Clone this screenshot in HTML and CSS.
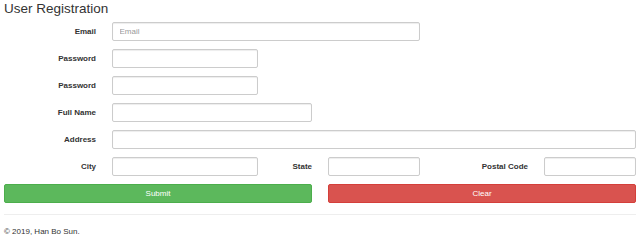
FILE: index.html
```html
<!DOCTYPE html>
<html lang="en">
<head>
<meta charset="utf-8">
<title>User Registration</title>
<link rel="stylesheet" href="styles.css">
</head>
<body>
<div class="container">
  <h3 class="title">User Registration</h3>
  <form class="form">
    <div class="row">
      <label class="label span2">Email</label>
      <input class="input span6" type="email" placeholder="Email">
    </div>
    <div class="row">
      <label class="label span2">Password</label>
      <input class="input span3" type="password">
    </div>
    <div class="row">
      <label class="label span2">Password</label>
      <input class="input span3" type="password">
    </div>
    <div class="row">
      <label class="label span2">Full Name</label>
      <input class="input span4" type="text">
    </div>
    <div class="row">
      <label class="label span2">Address</label>
      <input class="input span10" type="text">
    </div>
    <div class="row">
      <label class="label span2">City</label>
      <input class="input span3" type="text">
      <label class="label span1">State</label>
      <input class="input span2" type="text">
      <label class="label span2">Postal Code</label>
      <input class="input span2" type="text">
    </div>
    <div class="row">
      <button type="button" class="btn btn-success span6">Submit</button>
      <button type="button" class="btn btn-danger span6">Clear</button>
    </div>
  </form>
  <hr class="rule">
  <p class="footer">© 2019, Han Bo Sun.</p>
</div>
</body>
</html>
```

FILE: styles.css
```css
* { box-sizing: border-box; }
html, body { margin: 0; padding: 0; background: #fff; }
body {
  font-family: "Liberation Sans", Arial, Helvetica, sans-serif;
  font-size: 8px;
  color: #333;
}
.container {
  width: 640px;
  padding: 0 4px;
}
.title {
  margin: 1px 0 0 0;
  font-size: 13.5px;
  font-weight: 400;
  line-height: 16px;
  color: #333;
}
.form {
  margin-top: 5px;
  display: flex;
  flex-direction: column;
  gap: 8px;
}
.row {
  display: grid;
  grid-template-columns: repeat(12, 1fr);
  column-gap: 16px;
  align-items: center;
}
.span1 { grid-column: span 1; }
.span2 { grid-column: span 2; }
.span3 { grid-column: span 3; }
.span4 { grid-column: span 4; }
.span6 { grid-column: span 6; }
.span10 { grid-column: span 10; }
.label {
  text-align: right;
  font-weight: 700;
  font-size: 8px;
  line-height: 11px;
  white-space: nowrap;
  color: #333;
}
.input {
  height: 19px;
  margin: 0;
  padding: 0 6.5px;
  border: 1px solid #ccc;
  border-radius: 2px;
  box-shadow: inset 0 1px 1px rgba(0,0,0,.075);
  font-family: inherit;
  font-size: 8px;
  color: #555;
  background: #fff;
}
.input::placeholder { color: #999; }
.btn {
  height: 19px;
  margin: 0;
  padding: 0;
  border: 1px solid transparent;
  border-radius: 2px;
  font-family: inherit;
  font-size: 8px;
  color: #fff;
  text-align: center;
}
.btn-success { background: #5cb85c; border-color: #4cae4c; }
.btn-danger { background: #d9534f; border-color: #d43f3a; }
.rule {
  margin: 11px 0 0 0;
  border: 0;
  border-top: 1px solid #eee;
}
.footer {
  margin: 11px 0 0 0;
  line-height: 11px;
  font-size: 8px;
}
```
